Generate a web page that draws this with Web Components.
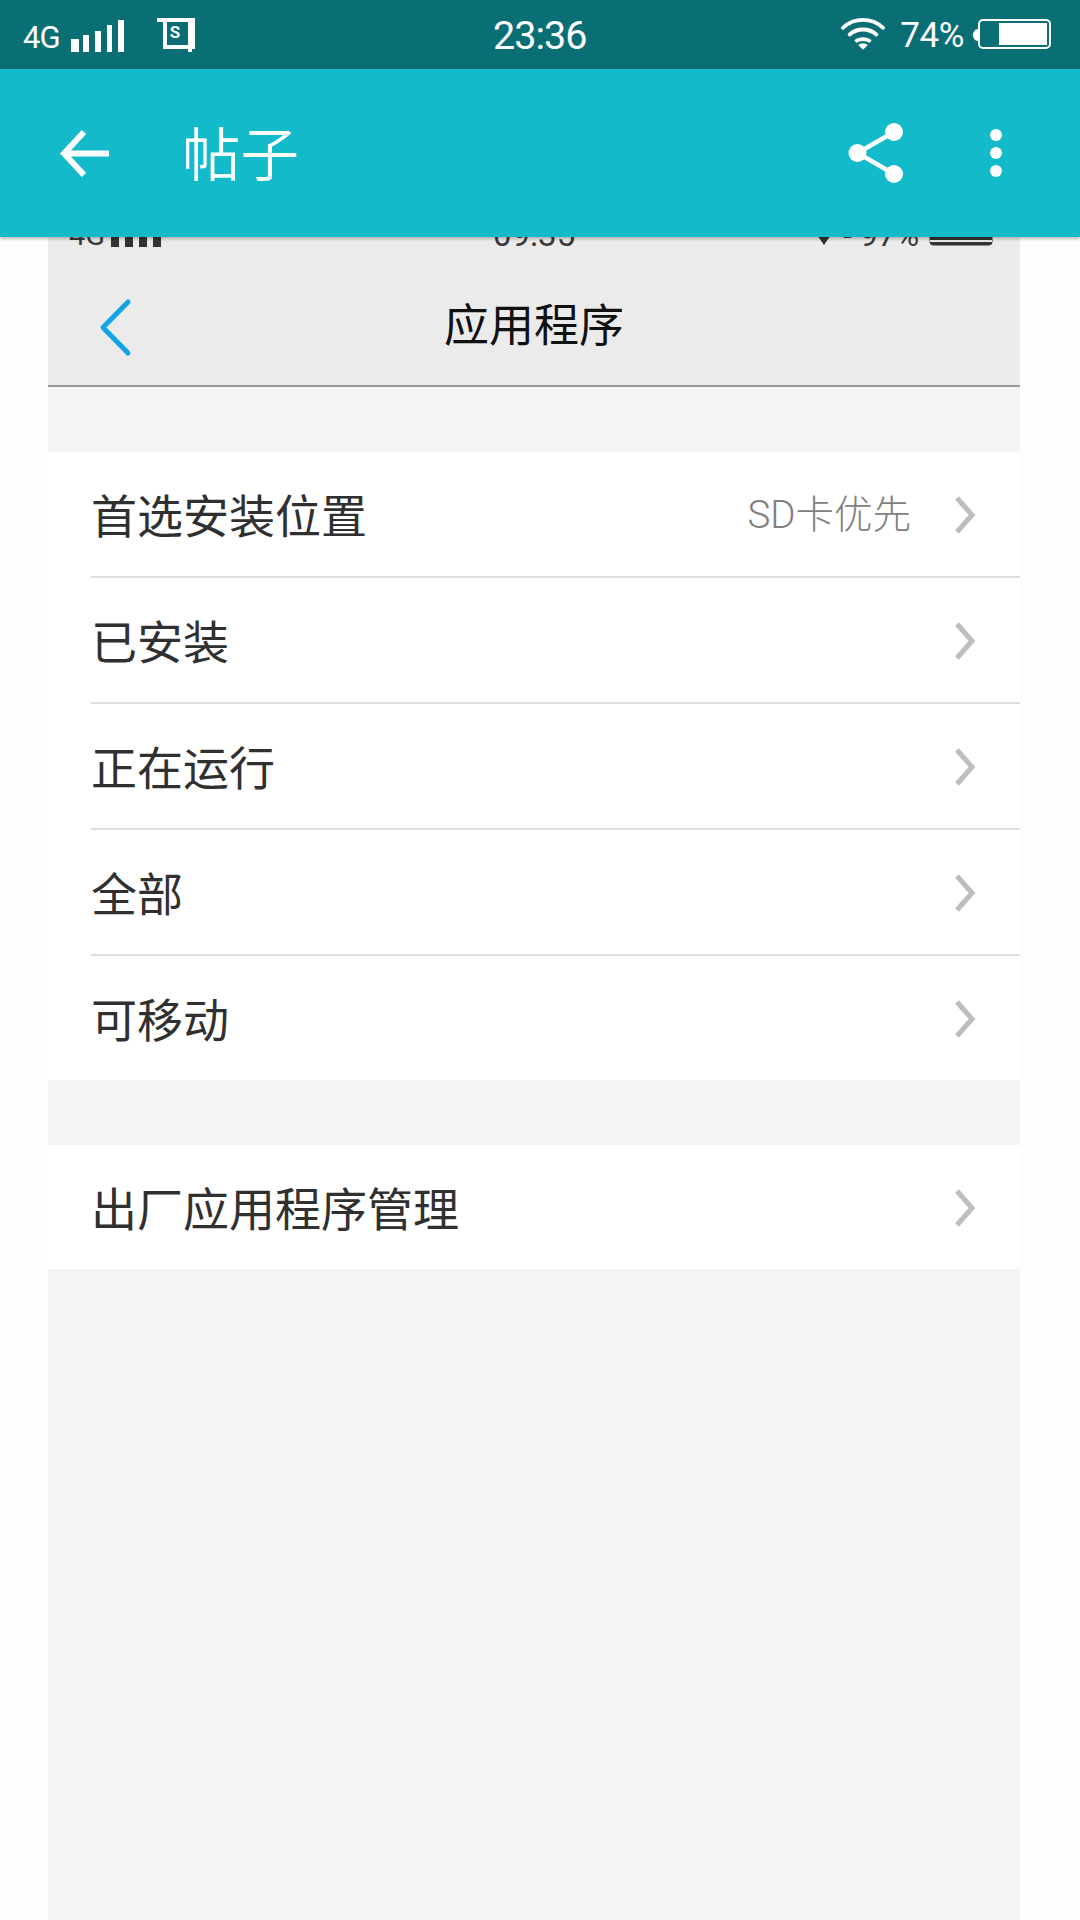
<!DOCTYPE html>
<html lang="zh">
<head>
<meta charset="utf-8">
<style>
    html, body { margin: 0; padding: 0; background: #fdfdfd; }
    body { width: 1080px; height: 1920px; overflow: hidden; font-family: Roboto, "Noto Sans CJK SC", sans-serif; display: flex; flex-direction: column; }
</style>
</head>
<body>
<phone-status-bar></phone-status-bar>
<phone-app-bar title-text="帖子"></phone-app-bar>
<post-screenshot>
    <settings-group>
        <settings-row label="首选安装位置" value="SD卡优先"></settings-row>
        <settings-row label="已安装"></settings-row>
        <settings-row label="正在运行"></settings-row>
        <settings-row label="全部"></settings-row>
        <settings-row label="可移动" last></settings-row>
    </settings-group>
    <settings-group>
        <settings-row label="出厂应用程序管理" last></settings-row>
    </settings-group>
</post-screenshot>

<script>
class PhoneStatusBar extends HTMLElement {
    constructor() {
        super();
        this.root = this.attachShadow({ mode: 'open' });
        this.root.innerHTML = `
            <style>
                :host { display: flex; flex: none; height: 69px; background: #0a6e75; color: #fff; align-items: center; justify-content: space-between; padding: 0 29px 0 23px; position: relative; font-family: Roboto, sans-serif; }
                .side { display: flex; align-items: center; }
                .net { font-size: 31px; width: 39px; letter-spacing: -0.8px; position: relative; top: 3px; }
                .time { position: absolute; left: 493px; top: 13px; font-size: 39.500px; line-height: 46px; font-weight: 400; letter-spacing: -1px; }
                .pct { font-size: 35px; margin: 0 9px 0 0; font-weight: 400; letter-spacing: -0.4px; position: relative; top: 1px; }
                svg { display: block; }
            </style>
            <div class="side">
                <span class="net">4G</span>
                <svg width="54" height="32" viewBox="0 0 54 32" style="margin-left:9px;position:relative;top:1px"><path fill="#fff" d="M0 19h8v13H0zM12 15h6v17h-6zM24 11h6v21h-6zM36 5h5v27h-5zM47 0h6v32h-6z"/></svg>
                <svg width="40" height="36" viewBox="0 0 40 36" style="margin-left:32px"><path fill="none" stroke="#fff" stroke-width="4" d="M0 3h8v27h28V3H6M33 3v32"/><text x="18" y="21" fill="#fff" font-size="17" font-weight="700" text-anchor="middle" font-family="Roboto, sans-serif">S</text></svg>
            </div>
            <span class="time">23:36</span>
            <div class="side">
                <svg width="44" height="33" viewBox="0 0 46 34" style="margin-right:15px"><g fill="none" stroke="#fff" stroke-width="4" stroke-linecap="round"><path d="M2 10C14-1 32-1 44 10"/><path d="M9 17c8-7 20-7 28 0"/></g><path fill="#fff" d="M14 23c5-4 13-4 18 0l-2 3c-4-3-10-3-14 0zM18 28c3-2 7-2 10 0l-5 5z"/></svg>
                <span class="pct">74%</span>
                <svg width="78" height="32" viewBox="0 0 78 32"><path fill="#fff" d="M5 10v12c-3 0-5-3-5-6s2-6 5-6z"/><rect x="6" y="1" width="71" height="28" rx="4" fill="none" stroke="#fff" stroke-width="2"/><rect x="26" y="4" width="48" height="22" fill="#fff"/></svg>
            </div>
        `;
    }
}

class PhoneAppBar extends HTMLElement {
    constructor() {
        super();
        this.root = this.attachShadow({ mode: 'open' });
    }

    connectedCallback() {
        this.root.innerHTML = `
            <style>
                :host { display: flex; flex: none; height: 168px; background: #13bac9; color: #fff; align-items: center; position: relative; z-index: 2; box-shadow: 0 2px 3px rgba(0,0,0,.25); }
                .back { margin-left: 60px; display: block; }
                h1 { margin: 0 0 0 73px; font: 350 58.500px/1 "Noto Sans CJK SC", sans-serif; flex: 1; position: relative; top: -2px; }
                .share { display: block; margin-right: 86px; }
                .more { display: block; margin-right: 78px; }
            </style>
            <svg class="back" width="49" height="49" viewBox="0 0 49 49"><path fill="none" stroke="#fff" stroke-width="6" d="M49 24.5H5M24 3L4 24.500L24 46"/></svg>
            <h1>${this.getAttribute('title-text') || ''}</h1>
            <svg class="share" width="56" height="60" viewBox="0 0 56 60"><g fill="#fff"><circle cx="9.500" cy="30" r="9"/><circle cx="46" cy="9" r="9"/><circle cx="46" cy="51" r="9"/></g><path fill="none" stroke="#fff" stroke-width="4.500" d="M46 9L9.500 30L46 51"/></svg>
            <svg class="more" width="12" height="48" viewBox="0 0 12 48"><g fill="#fff"><circle cx="6" cy="6" r="6"/><circle cx="6" cy="24" r="6"/><circle cx="6" cy="42" r="6"/></g></svg>
        `;
    }
}

class PostScreenshot extends HTMLElement {
    constructor() {
        super();
        this.root = this.attachShadow({ mode: 'open' });
        this.root.innerHTML = `
            <style>
                :host { display: flex; flex-direction: column; flex: 1; margin: 0 60px 0 48px; background: #f4f4f4; overflow: hidden; }
                header { flex: none; height: 150px; box-sizing: border-box; background: #ebebeb; border-bottom: 2px solid #9a9a9a; position: relative; overflow: hidden; display: flex; align-items: center; justify-content: center; }
                .title { font: 400 45px/1 "Noto Sans CJK SC", sans-serif; color: #111; position: relative; top: 11px; }
                .chev { position: absolute; left: 51px; top: 61px; display: block; }
                /* the top of the photographed page is hidden under the app bar */
                .cut { position: absolute; left: 0; right: 0; top: -25px; height: 40px; color: #3a3a3a; font-family: Roboto, sans-serif; }
                .cut span, .cut svg { position: absolute; }
                .cut span { line-height: 36px; font-size: 33px; top: 5px; }
                .groups { display: flex; flex-direction: column; gap: 65px; padding-top: 65px; }
            </style>
            <header>
                <div class="cut">
                    <span style="left:21px;font-size:29px">4G</span>
                    <svg style="left:63px;top:5px" width="51" height="30" viewBox="0 0 51 30"><path fill="#333" d="M0 6h8v24H0zM14 6h8v24h-8zM28 6h8v24h-8zM42 6h8v24h-8z"/></svg>
                    <span style="left:445px">09:35</span>
                    <svg style="left:768px;top:19px" width="16" height="16" viewBox="0 0 16 16"><path fill="#333" d="M1 4h14L8 14z"/></svg>
                    <span style="left:795px;font-size:32px">- 97%</span>
                    <svg style="left:881px;top:4px" width="65" height="30" viewBox="0 0 65 30"><rect x="1" y="1" width="62" height="28" rx="3" fill="#333" stroke="#333"/><rect x="1" y="24" width="62" height="2" fill="#ebebeb"/></svg>
                </div>
                <svg class="chev" width="34" height="62" viewBox="0 0 34 62"><path fill="none" stroke="#12a5e6" stroke-width="5" stroke-linecap="round" stroke-linejoin="round" d="M29 4L4 29.500L29 55"/></svg>
                <span class="title">应用程序</span>
            </header>
            <div class="groups"><slot></slot></div>
        `;
    }
}

class SettingsGroup extends HTMLElement {
    constructor() {
        super();
        this.root = this.attachShadow({ mode: 'open' });
        this.root.innerHTML = `
            <style>
                :host { display: block; background: #fff; }
            </style>
            <slot></slot>
        `;
    }
}

class SettingsRow extends HTMLElement {
    constructor() {
        super();
        this.root = this.attachShadow({ mode: 'open' });
    }

    connectedCallback() {
        const value = this.getAttribute('value');
        this.root.innerHTML = `
            <style>
                :host { display: block; padding-left: 43px; }
                .row { display: flex; align-items: center; box-sizing: border-box; height: 126px; padding-right: 44px; border-bottom: 2px solid #dfdfdf; }
                :host([last]) .row { height: 124px; border-bottom: 0; }
                .label { flex: 1; font: 400 46px/1 "Noto Sans CJK SC", sans-serif; color: #303030; padding-bottom: 3px; }
                .value { font: 300 38.500px/1 Roboto, "Noto Sans CJK SC", sans-serif; color: #808080; margin-right: 43px; padding-top: 2px; }
                svg { display: block; margin-top: 2px; }
            </style>
            <div class="row">
                <span class="label">${this.getAttribute('label') || ''}</span>
                ${value ? `<span class="value">${value}</span>` : ''}
                <svg width="22" height="38" viewBox="0 0 22 38"><path fill="none" stroke="#bdbdbd" stroke-width="5" d="M3 2l15 17L3 36"/></svg>
            </div>
        `;
    }
}

customElements.define('phone-status-bar', PhoneStatusBar);
customElements.define('phone-app-bar', PhoneAppBar);
customElements.define('post-screenshot', PostScreenshot);
customElements.define('settings-group', SettingsGroup);
customElements.define('settings-row', SettingsRow);
</script>
</body>
</html>
